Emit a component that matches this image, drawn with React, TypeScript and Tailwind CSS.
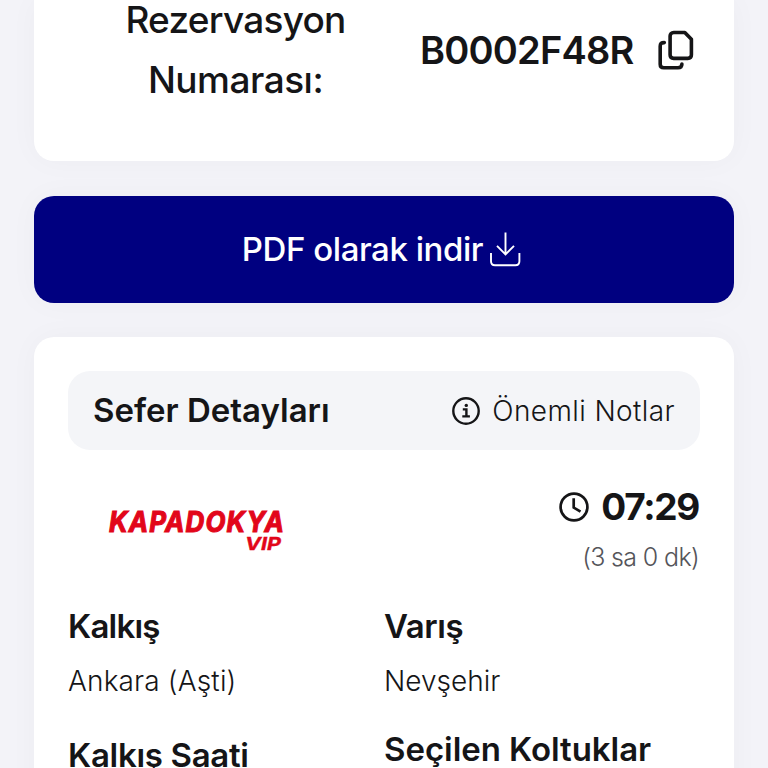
import React from 'react';

function CopyIcon() {
  return (
    <svg className="h-10 w-9 shrink-0" viewBox="0 0 36 40" fill="none" stroke="#151517" strokeWidth="3.6" strokeLinejoin="round" strokeLinecap="round">
      <path d="M15.7 2.5h11.1l6.6 6.8v15.5c0 2.2-1.4 3.6-3.6 3.6H15.7c-2.2 0-3.6-1.4-3.6-3.6V6.1c0-2.2 1.4-3.6 3.6-3.6Z" />
      <path d="M6.3 12.6c-2.6 0-4.1 1.2-4.1 3.6v18c0 2.2 1.4 3.6 3.6 3.6h14.2c2.4 0 3.9-1.4 3.9-3.8" />
    </svg>
  );
}

function DownloadIcon() {
  return (
    <svg className="h-9 w-8 shrink-0" viewBox="0 0 32 36" fill="none" stroke="#ffffff" strokeWidth="1.9">
      <path d="M16.5 .5v22M8 13.8l8.5 8.7 8.5-8.7M2 21v8.2c0 2.6 1.4 4 4 4h20.4c2.6 0 4-1.4 4-4V21" />
    </svg>
  );
}

function InfoIcon() {
  return (
    <svg className="size-7 shrink-0" viewBox="0 0 28 28" fill="none" stroke="#151517" strokeWidth="2.4">
      <circle cx="14" cy="14" r="12.7" />
      <path d="M10.8 12.4h3.6v6.6M10.3 19.4h7.6" />
      <circle cx="14.3" cy="8.4" r="1.7" fill="#151517" stroke="none" />
    </svg>
  );
}

function ClockIcon() {
  return (
    <svg className="size-[30px] shrink-0" viewBox="0 0 30 30" fill="none" stroke="#151517" strokeWidth="2.7">
      <circle cx="15" cy="15" r="13.4" />
      <path d="M14.7 6.2v9.4l6.8 4" />
    </svg>
  );
}

function Logo() {
  return (
    <svg className="h-[52px] w-[184px] overflow-visible" viewBox="0 0 184 52" fill="#e2061a" stroke="#e2061a" fontFamily="Inter, sans-serif" fontWeight="700" fontStyle="italic">
      <text x="3" y="26" fontSize="28" strokeWidth="1.1" letterSpacing="1.2" textLength="176" lengthAdjust="spacingAndGlyphs">KAPADOKYA</text>
      <text x="139" y="43.5" fontSize="18" strokeWidth="0.4" textLength="36" lengthAdjust="spacingAndGlyphs">VIP</text>
    </svg>
  );
}

export default function App() {
  return (
    <main className="h-[768px] w-[768px] overflow-hidden bg-[#f3f3f8] px-[34px] font-['Inter',sans-serif] text-[#151517]">
      <section className="flex h-[161px] items-start rounded-b-[20px] bg-white px-[34px] shadow-[0_0_30px_rgba(0,0,0,0.03)]">
        <div className="-mt-[10px] w-[335px] text-center text-[37px] leading-[60px] font-[450]">
          <div className="tracking-[-0.75px]">Rezervasyon</div>
          <div className="tracking-[-0.5px]">Numarası:</div>
        </div>
        <div className="mt-5 flex h-[60px] items-center">
          <span className="ml-[17px] w-[238px] text-[38px] font-semibold tracking-[-0.8px] whitespace-nowrap">B0002F48R</span>
          <CopyIcon />
        </div>
      </section>

      <button className="mt-[35px] flex h-[107px] w-full items-center justify-center gap-[6px] rounded-[20px] bg-[#000080] pr-[5px] text-[33px] font-medium text-white shadow-[0_0_30px_rgba(0,0,0,0.03)]">
        <span className="tracking-[-0.45px] whitespace-nowrap">PDF olarak indir</span>
        <DownloadIcon />
      </button>

      <section className="mt-[34px] h-[500px] rounded-[20px] bg-white px-[34px] pt-[34px] shadow-[0_0_30px_rgba(0,0,0,0.03)]">
        <header className="flex h-[79px] items-center justify-between rounded-[22px] bg-[#f4f5f8] px-[25px] pt-px">
          <h2 className="text-[33px] font-semibold whitespace-nowrap">Sefer Detayları</h2>
          <div className="flex items-center gap-[12px]">
            <InfoIcon />
            <span className="text-[28px] font-light tracking-[0.4px] whitespace-nowrap">Önemli Notlar</span>
          </div>
        </header>

        <div className="flex justify-between pt-[27px]">
          <div className="pt-[29px] pl-[38px]"><Logo /></div>
          <div className="flex flex-col items-end">
            <div className="flex h-[60px] items-center gap-3 pr-px">
              <ClockIcon />
              <span className="text-[37px] font-bold tracking-[-1.3px] whitespace-nowrap">07:29</span>
            </div>
            <span className="pr-px text-[25px] leading-10 font-light tracking-[-0.65px] whitespace-nowrap text-[#55555a]">(3 sa 0 dk)</span>
          </div>
        </div>

        <div className="mt-[21px] grid grid-cols-[316px_1fr] whitespace-nowrap">
          <div>
            <h3 className="text-[33px] leading-[56px] font-semibold tracking-[-0.8px]">Kalkış</h3>
            <p className="text-[28px] leading-[54px] font-light tracking-[0.15px]">Ankara (Aşti)</p>
            <h3 className="mt-[19px] text-[33px] leading-[56px] font-semibold tracking-[-0.3px]">Kalkış Saati</h3>
          </div>
          <div>
            <h3 className="text-[33px] leading-[56px] font-semibold tracking-[-0.4px]">Varış</h3>
            <p className="text-[28px] leading-[54px] font-light">Nevşehir</p>
            <h3 className="mt-[13px] text-[33px] leading-[56px] font-semibold tracking-[-0.05px]">Seçilen Koltuklar</h3>
          </div>
        </div>
      </section>
    </main>
  );
}
